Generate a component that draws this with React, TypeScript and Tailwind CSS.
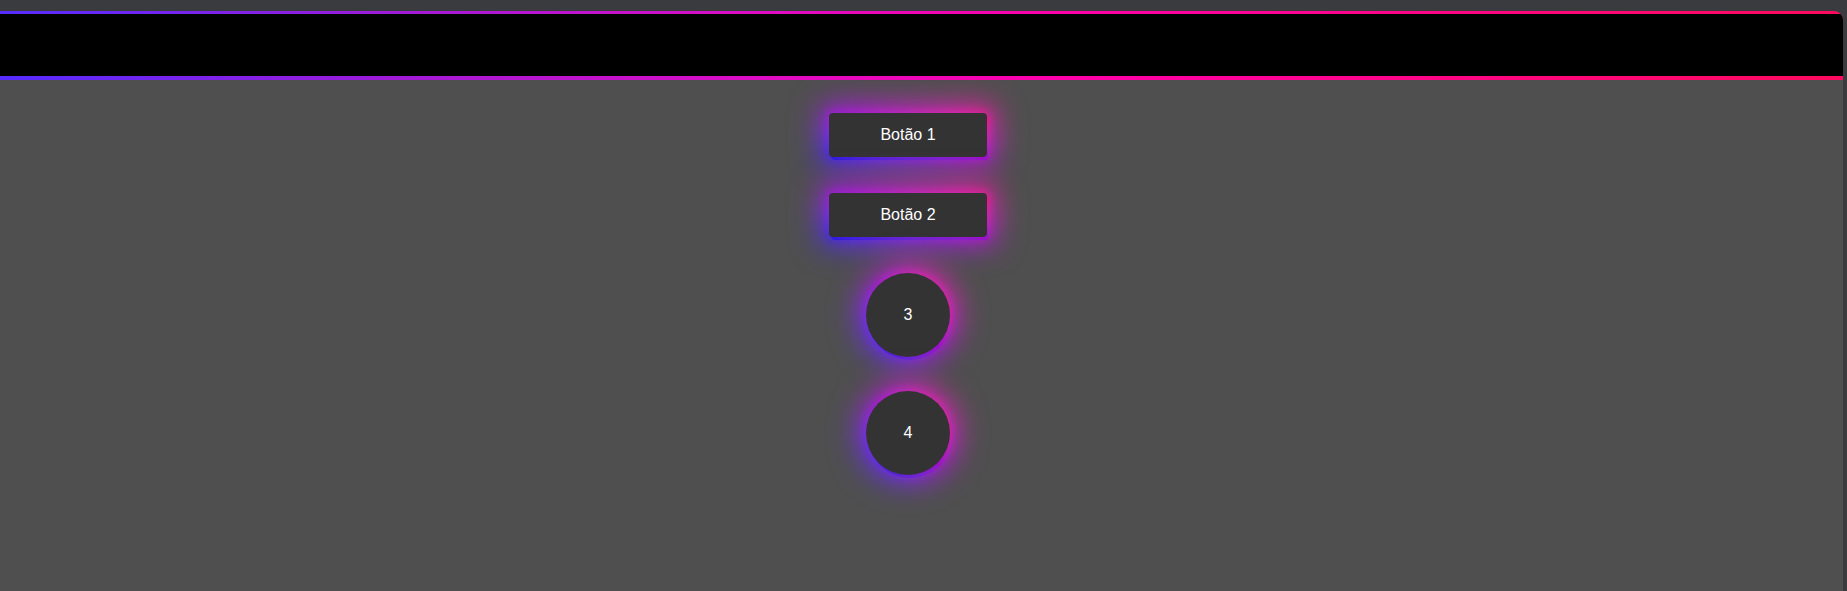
const GlowBox = ({ label, round }: { label: string; round?: boolean }) => {
  const shape = round ? "rounded-full" : "rounded-[4px]"
  const size = round ? "w-[84px] h-[84px]" : "w-[158px] h-[44px]"
  return (
    <div className={`relative ${size}`}>
      <div
        className={`absolute -inset-[8px] ${shape} bg-gradient-to-tr from-[#1f1cff] via-[#b00ee0] to-[#ff0a94] blur-[15px]`}
      />
      <div
        className={`absolute -inset-[2px] ${shape} bg-gradient-to-tr from-[#2a20ff] via-[#b010e0] to-[#ff0a90] blur-[5px] opacity-80`}
      />
      <div
        className={`absolute inset-0 translate-x-[2px] translate-y-[3px] ${shape} bg-gradient-to-tr from-[#2a18e0] via-[#9a10c8] to-[#f00a80]`}
      />
      <button
        className={`relative ${size} ${shape} bg-[#333333] text-white text-base flex items-center justify-center`}
        style={{ fontFamily: '"Liberation Sans", Arial, sans-serif' }}
      >
        {label}
      </button>
    </div>
  )
}

const App = () => {
  return (
    <div className="h-screen w-full bg-[#3a3b3f] pt-[11px] pr-[4px] overflow-hidden">
      <div className="h-full bg-[#4f4f4f] rounded-tr-[9px] overflow-hidden">
        <div className="bg-[linear-gradient(90deg,#552cff_0%,#a21ad6_22%,#e00cc4_42%,#ff00aa_58%,#ff0a5e_100%)] pt-[3px] pb-[4px]">
          <div className="h-[62px] bg-black" />
        </div>
        <div className="flex flex-col items-center pr-[27px]">
          <div className="mt-[33px]">
            <GlowBox label="Botão 1" />
          </div>
          <div className="mt-[36px]">
            <GlowBox label="Botão 2" />
          </div>
          <div className="mt-[36px]">
            <GlowBox label="3" round />
          </div>
          <div className="mt-[34px]">
            <GlowBox label="4" round />
          </div>
        </div>
      </div>
    </div>
  )
}

export default App;
